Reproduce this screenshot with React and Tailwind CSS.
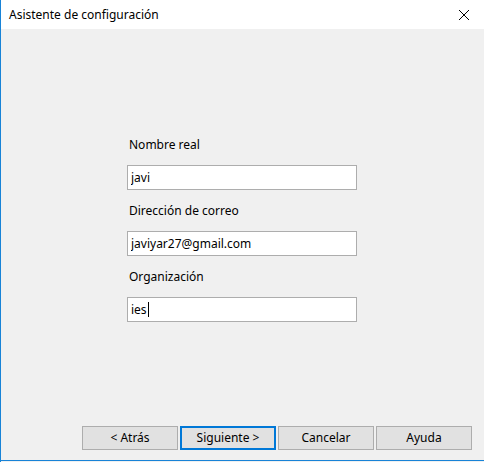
import React, { useState } from 'react';

const font = { fontFamily: '"Noto Sans", "Liberation Sans", sans-serif' };

const Field = ({ label, value, onChange, caret }) => (
  <div className="flex flex-col">
    <label className="h-[20px] pl-[2px] text-[12px] leading-[20px] text-black">{label}</label>
    <div className="mt-[10px] flex h-[25px] w-[230px] items-center border border-[#adadad] bg-white pl-[3px] text-[12px] text-black">
      {caret ? (
        <div className="flex items-center">
          <span>{value}</span>
          <span className="ml-[1px] inline-block h-[15px] w-[1px] bg-black" />
        </div>
      ) : (
        <input
          value={value}
          onChange={onChange}
          className="w-full bg-transparent outline-none"
          style={font}
        />
      )}
    </div>
  </div>
);

const Btn = ({ children, primary }) => (
  <button
    className={`h-[24px] w-[96px] bg-[#e1e1e1] text-[12px] text-black ${
      primary ? 'border-2 border-[#0078d7]' : 'border border-[#adadad]'
    }`}
    style={font}
  >
    {children}
  </button>
);

export default function App() {
  const [name, setName] = useState('javi');
  const [mail, setMail] = useState('javiyar27@gmail.com');

  return (
    <div className="flex h-[462px] w-[484px] flex-col border-l border-[#1883d7] bg-white" style={font}>
      {/* Title bar */}
      <div className="flex h-[29px] items-center justify-between bg-white pl-[8px] pr-[14px]">
        <span className="text-[12px] text-black">Asistente de configuración</span>
        <svg width="12" height="12" viewBox="0 0 12 12" className="text-black">
          <path d="M1 1 L11 11 M11 1 L1 11" stroke="currentColor" strokeWidth="1" />
        </svg>
      </div>

      {/* Body */}
      <div className="flex flex-1 flex-col bg-[#f0f0f0]">
        <div className="flex flex-col gap-[11px] pl-[126px] pt-[106px]">
          <Field label="Nombre real" value={name} onChange={(e) => setName(e.target.value)} />
          <Field label="Dirección de correo" value={mail} onChange={(e) => setMail(e.target.value)} />
          <Field label="Organización" value="ies" caret />
        </div>

        {/* Buttons */}
        <div className="mt-auto flex gap-[2px] pb-[10px] pl-[81px]">
          <Btn>&lt; Atrás</Btn>
          <Btn primary>Siguiente &gt;</Btn>
          <Btn>Cancelar</Btn>
          <Btn>Ayuda</Btn>
        </div>
      </div>
      <div className="h-[1px] bg-[#1883d7]" />
      <div className="h-[1px] bg-[#f0f0f0]" />
    </div>
  );
}
